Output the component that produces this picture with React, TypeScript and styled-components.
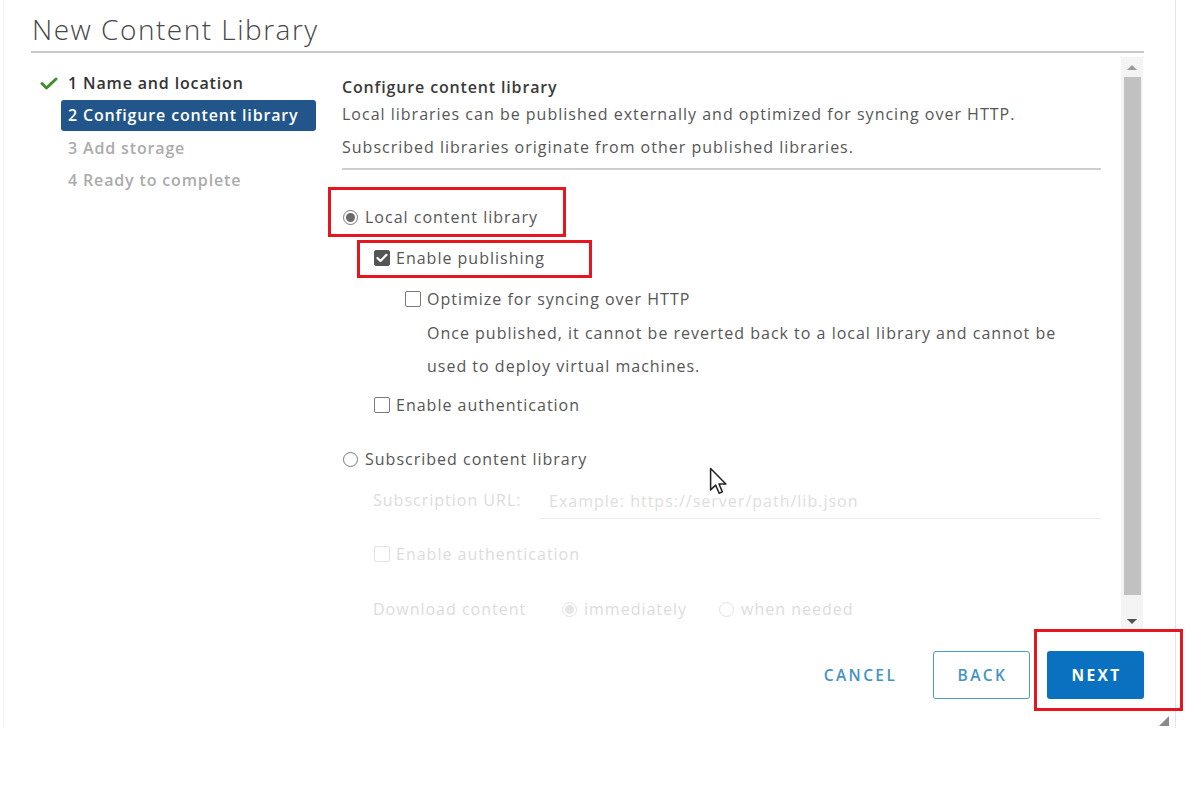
import React from 'react';
import styled, { createGlobalStyle, css } from 'styled-components';

const GlobalStyle = createGlobalStyle`
  html, body {
    margin: 0;
    padding: 0;
    background: #ffffff;
  }
  body {
    font-family: 'Open Sans', 'Liberation Sans', sans-serif;
    color: #565656;
    -webkit-font-smoothing: antialiased;
  }
  * {
    box-sizing: border-box;
  }
`;

const Dialog = styled.div`
  position: relative;
  width: 1173px;
  height: 728px;
  margin-left: 3px;
  padding: 0 31px 0 27px;
  border-left: 1px solid #f4f4f4;
  border-right: 1px solid #e4e4e4;
  display: flex;
  flex-direction: column;
`;

const Header = styled.div`
  height: 53px;
  padding-top: 12px;
  border-bottom: 2px solid #c9c9c9;
`;

const Title = styled.h1`
  margin: 0 0 0 1px;
  font-size: 28px;
  line-height: 34px;
  font-weight: 300;
  color: #474747;
  letter-spacing: 1.5px;
`;

const Body = styled.div`
  display: flex;
  height: 579px;
`;

const Nav = styled.nav`
  width: 311px;
  padding: 14px 0 0 9px;
`;

const NavItem = styled.div`
  display: flex;
  align-items: center;
  height: 32.5px;
`;

const NavIcon = styled.span`
  width: 21px;
  display: flex;
  align-items: center;
`;

type NavLabelProps = { $state: 'done' | 'active' | 'todo' };

const NavLabel = styled.span<NavLabelProps>`
  width: 255px;
  height: 31px;
  padding: 0 7px;
  border-radius: 3px;
  font-size: 16px;
  line-height: 31px;
  font-weight: 600;
  letter-spacing: 0.85px;
  color: #333;
  white-space: nowrap;
  ${({ $state }) =>
    $state === 'active' &&
    css`
      background: #22558a;
      color: #ffffff;
    `}
  ${({ $state }) =>
    $state === 'todo' &&
    css`
      color: #ababab;
    `}
`;

const Content = styled.div`
  flex: 1;
  display: flex;
`;

const Panel = styled.div`
  position: relative;
  flex: 1;
  padding: 23px 20px 0 0;
`;

const Heading = styled.div`
  font-size: 16px;
  line-height: 22px;
  font-weight: 600;
  letter-spacing: 0.85px;
  color: #3b3b3b;
`;

const Paragraph = styled.p<{ $indent?: number }>`
  margin: 0 0 0 ${({ $indent }) => $indent ?? 0}px;
  font-size: 16px;
  line-height: 33px;
  letter-spacing: 1px;
  color: #565656;
  white-space: nowrap;
`;

const Divider = styled.hr`
  margin: 4px 0 0;
  border: none;
  height: 2px;
  background: #cfcfcf;
`;

type RowProps = { $indent?: number; $gap?: number; $disabled?: boolean };

const OptionRow = styled.label<RowProps>`
  position: relative;
  display: flex;
  align-items: center;
  width: fit-content;
  height: 41px;
  margin-left: ${({ $indent }) => $indent ?? 0}px;
  margin-top: ${({ $gap }) => $gap ?? 0}px;
  font-size: 16px;
  letter-spacing: 1px;
  white-space: nowrap;
  color: ${({ $disabled }) => ($disabled ? '#dcdcdc' : '#565656')};
`;

const Note = styled(Paragraph)`
  margin-top: -3px;
`;

const FieldRow = styled.div<RowProps>`
  display: flex;
  align-items: center;
  height: 41px;
  margin-left: ${({ $indent }) => $indent ?? 0}px;
  margin-top: ${({ $gap }) => $gap ?? 0}px;
  font-size: 16px;
  letter-spacing: 1px;
  white-space: nowrap;
  color: #dcdcdc;
`;

const FieldLabel = styled.span<{ $width: number }>`
  width: ${({ $width }) => $width}px;
`;

const UrlInput = styled.div`
  flex: 1;
  height: 36px;
  padding: 7px 0 0 9px;
  margin-top: 2px;
  border-bottom: 1px solid #ececec;
  color: #dedede;
`;

const Choice = styled.span`
  display: inline-flex;
  align-items: center;
  width: 157px;
`;

type ControlProps = { $checked?: boolean; $disabled?: boolean };

const Radio = styled.span<ControlProps>`
  position: relative;
  width: 15px;
  height: 15px;
  margin: 0 7px 0 1px;
  border-radius: 50%;
  border: 1px solid ${({ $disabled }) => ($disabled ? '#e2e2e2' : '#7a7a7a')};
  background: #fff;
  flex-shrink: 0;
  ${({ $checked, $disabled }) =>
    $checked &&
    css`
      &::after {
        content: '';
        position: absolute;
        inset: 2px;
        border-radius: 50%;
        background: ${$disabled ? '#e6e6e6' : '#6a6a6a'};
      }
    `}
`;

const Checkbox = styled.span<ControlProps>`
  display: inline-flex;
  align-items: center;
  justify-content: center;
  width: 16px;
  height: 16px;
  margin: 0 6px 0 1px;
  border-radius: 2px;
  flex-shrink: 0;
  border: 1px solid ${({ $disabled }) => ($disabled ? '#e2e2e2' : '#7a7a7a')};
  background: ${({ $checked }) => ($checked ? '#555' : '#fff')};
  ${({ $checked }) =>
    $checked &&
    css`
      border-color: #555;
    `}
`;

type MarkProps = { $top: number; $left: number; $width: number; $height: number };

// red callout frame drawn over the annotated element
const Mark = styled.span<MarkProps>`
  position: absolute;
  top: ${({ $top }) => $top}px;
  left: ${({ $left }) => $left}px;
  width: ${({ $width }) => $width}px;
  height: ${({ $height }) => $height}px;
  border: 3px solid #e5161f;
  pointer-events: none;
`;

const Scrollbar = styled.div`
  width: 22px;
  margin: 4px 1px 0 0;
  height: 575px;
  background: #f4f4f4;
  display: flex;
  flex-direction: column;
  align-items: center;
`;

const ScrollArrow = styled.div<{ $down?: boolean }>`
  height: 20px;
  width: 100%;
  display: flex;
  align-items: center;
  justify-content: center;
  &::before {
    content: '';
    width: 0;
    height: 0;
    border-left: 5px solid transparent;
    border-right: 5px solid transparent;
    ${({ $down }) =>
      $down
        ? css`
            border-top: 5px solid #505050;
          `
        : css`
            border-bottom: 5px solid #9a9a9a;
          `}
  }
`;

const ScrollThumb = styled.div`
  width: 17px;
  height: 518px;
  background: #c1c1c1;
`;

const ScrollRest = styled.div`
  flex: 1;
  display: flex;
  align-items: flex-end;
  padding-bottom: 1px;
`;

const Footer = styled.div`
  display: flex;
  justify-content: flex-end;
  align-items: center;
  gap: 17px;
  padding-top: 19px;
`;

type ButtonProps = { $variant: 'flat' | 'outline' | 'primary' };

const Button = styled.button<ButtonProps>`
  position: relative;
  width: 97px;
  height: 48px;
  padding: 0 0 0 2px;
  border-radius: 3px;
  font-family: 'Open Sans', 'Liberation Sans', sans-serif;
  font-size: 15.5px;
  font-weight: 600;
  letter-spacing: 2.4px;
  cursor: pointer;
  ${({ $variant }) =>
    $variant === 'flat' &&
    css`
      margin-right: 8px;
      border: none;
      background: transparent;
      color: #4593c4;
    `}
  ${({ $variant }) =>
    $variant === 'outline' &&
    css`
      border: 1px solid #4e9ac9;
      background: #fff;
      color: #4593c4;
    `}
  ${({ $variant }) =>
    $variant === 'primary' &&
    css`
      border: none;
      background: #0a71c1;
      color: #fff;
      font-weight: 700;
    `}
`;

const Pointer = styled.svg`
  position: absolute;
  left: 705px;
  top: 467px;
`;

const Grip = styled.svg`
  position: absolute;
  right: 6px;
  bottom: 2px;
`;

const CheckMark = () => (
  <svg width='18' height='14' viewBox='0 0 18 14'>
    <polyline points='2,7.5 6.5,12 16,3' fill='none' stroke='#3f8d2f' strokeWidth='3' strokeLinecap='round' strokeLinejoin='round' />
  </svg>
);

const Tick = () => (
  <svg width='12' height='10' viewBox='0 0 12 10'>
    <polyline points='1.5,5 4.5,8 10.5,1.8' fill='none' stroke='#fff' strokeWidth='2.2' strokeLinecap='round' strokeLinejoin='round' />
  </svg>
);

const steps: { label: string; state: 'done' | 'active' | 'todo' }[] = [
  { label: '1 Name and location', state: 'done' },
  { label: '2 Configure content library', state: 'active' },
  { label: '3 Add storage', state: 'todo' },
  { label: '4 Ready to complete', state: 'todo' },
];

export default function App() {
  return (
    <>
      <GlobalStyle />
      <Dialog>
        <Header>
          <Title>New Content Library</Title>
        </Header>
        <Body>
          <Nav>
            {steps.map(step => (
              <NavItem key={step.label}>
                <NavIcon>{step.state === 'done' && <CheckMark />}</NavIcon>
                <NavLabel $state={step.state}>{step.label}</NavLabel>
              </NavItem>
            ))}
          </Nav>
          <Content>
            <Panel>
              <Heading>Configure content library</Heading>
              <Paragraph>Local libraries can be published externally and optimized for syncing over HTTP.</Paragraph>
              <Paragraph>Subscribed libraries originate from other published libraries.</Paragraph>
              <Divider />

              <OptionRow $gap={26.5}>
                <Radio $checked />
                Local content library
                <Mark $top={-9.5} $left={-14} $width={238} $height={50} />
              </OptionRow>
              <OptionRow $indent={31}>
                <Checkbox $checked>
                  <Tick />
                </Checkbox>
                Enable publishing
                <Mark $top={2.5} $left={-16} $width={235} $height={38} />
              </OptionRow>
              <OptionRow $indent={62}>
                <Checkbox />
                Optimize for syncing over HTTP
              </OptionRow>
              <Note $indent={85}>Once published, it cannot be reverted back to a local library and cannot be</Note>
              <Paragraph $indent={85}>used to deploy virtual machines.</Paragraph>
              <OptionRow $indent={31} $gap={2}>
                <Checkbox />
                Enable authentication
              </OptionRow>

              <OptionRow $gap={13}>
                <Radio />
                Subscribed content library
              </OptionRow>
              <FieldRow $indent={31}>
                <FieldLabel $width={167}>Subscription URL:</FieldLabel>
                <UrlInput>Example: https://server/path/lib.json</UrlInput>
              </FieldRow>
              <OptionRow $indent={31} $gap={13} $disabled>
                <Checkbox $disabled />
                Enable authentication
              </OptionRow>
              <FieldRow $indent={31} $gap={14}>
                <FieldLabel $width={188}>Download content</FieldLabel>
                <Choice>
                  <Radio $checked $disabled />
                  immediately
                </Choice>
                <Choice>
                  <Radio $disabled />
                  when needed
                </Choice>
              </FieldRow>
            </Panel>
            <Scrollbar>
              <ScrollArrow />
              <ScrollThumb />
              <ScrollRest>
                <ScrollArrow $down />
              </ScrollRest>
            </Scrollbar>
          </Content>
        </Body>
        <Footer>
          <Button $variant='flat'>CANCEL</Button>
          <Button $variant='outline'>BACK</Button>
          <Button $variant='primary'>
            NEXT
            <Mark $top={-22} $left={-13} $width={149} $height={82} />
          </Button>
        </Footer>
        <Pointer width='20' height='29' viewBox='0 0 13 19'>
          <path d='M1 1 L1 15 L4.3 11.9 L6.6 17.2 L8.7 16.3 L6.5 11.1 L11 11.1 Z' fill='#fff' stroke='#222' strokeWidth='1' strokeLinejoin='round' />
        </Pointer>
        <Grip width='10' height='10' viewBox='0 0 10 10'>
          <polygon points='10,0 10,10 0,10' fill='#8a8a8a' />
        </Grip>
      </Dialog>
    </>
  );
}
